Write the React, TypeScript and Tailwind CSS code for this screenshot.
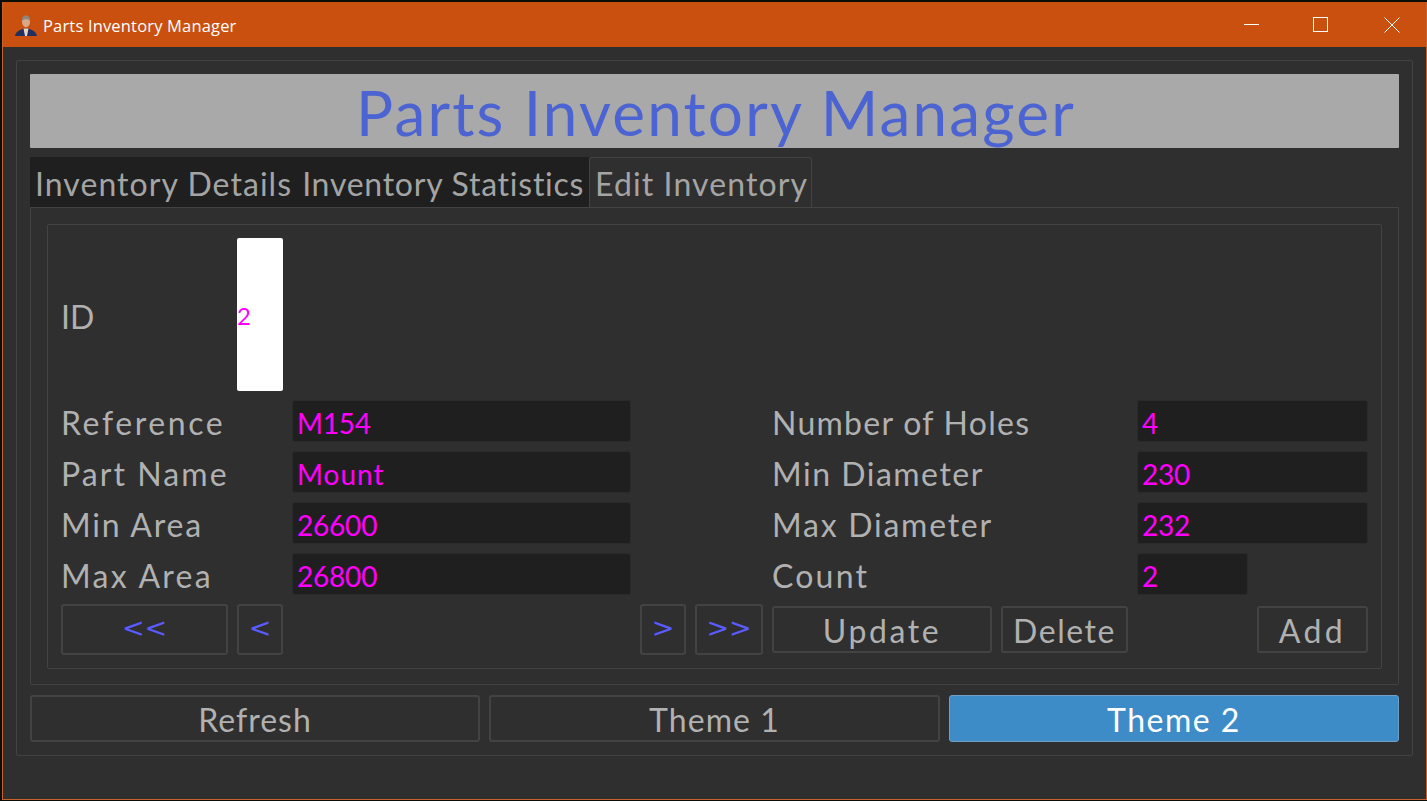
import React from "react";

const font = "font-['Lato','Open_Sans',sans-serif]";

function Field({ label, value, tl, tv = "tracking-[1px]", width = "w-[339px]", labelW = "w-[231px]" }: { label: string; value: string; tl: string; tv?: string; width?: string; labelW?: string }) {
  return (
    <div className="flex h-[42px] items-center">
      <div className={`${labelW} pt-[4px] text-[32px] ${tl} text-[#b1b1b1]`}>{label}</div>
      <div className={`${width} h-[42px] flex items-center rounded-[3px] border border-[#2a2a2a] bg-[#1f1f1f] pl-[4px] pt-[3px] text-[28px] ${tv} text-[#ff00ff]`}>{value}</div>
    </div>
  );
}

function NavBtn({ w, children }: { w: string; children: React.ReactNode }) {
  return (
    <div className={`${w} h-[51px] flex items-center justify-center rounded-[3px] border-2 border-[#434343] font-['DejaVu_Sans',sans-serif] text-[27px] text-[#5a5cff] pb-[3px]`}>{children}</div>
  );
}

function ActBtn({ w, t, children, extra = "" }: { w: string; t: string; children: React.ReactNode; extra?: string }) {
  return (
    <div className={`${w} ${extra} h-[47px] flex items-center justify-center rounded-[3px] border-2 border-[#434343] pt-[3px] text-[32px] ${t} text-[#b1b1b1]`}>{children}</div>
  );
}

export default function App() {
  return (
    <div className={`h-[801px] w-[1427px] overflow-hidden bg-[#0d0d08] pt-[2px] pl-[2px] pb-[1px] ${font}`}>
      <div className="flex h-[798px] flex-col border-l border-r border-b border-[#c9622a] bg-[#2f2f2f]">
        <div className="flex h-[45px] shrink-0 items-center justify-between bg-[#c9500e] pl-[12px]">
          <div className="flex items-center gap-[6px]">
            <svg width="22" height="24" viewBox="0 0 22 24" className="mt-[3px]">
              <path d="M0 22 C1 17 6 15.5 8.5 14.5 L13.5 14.5 C16 15.5 21 17 22 22 Z" fill="#20305f" />
              <path d="M8.5 14.5 L13.5 14.5 L12 22 L10 22 Z" fill="#e9d3c5" />
              <ellipse cx="11" cy="7.5" rx="4" ry="5.8" fill="#d9a888" />
              <path d="M7 7 C7 2.5 9 1.5 11 1.5 C13 1.5 15 2.5 15 7 C14 4.5 8 4.5 7 7 Z" fill="#8d8580" />
            </svg>
            <span className="mt-[3px] font-['Open_Sans',sans-serif] text-[16.5px] tracking-[0.17px] text-white">Parts Inventory Manager</span>
          </div>
          <div className="flex items-center">
            <div className="flex h-[45px] w-[70px] items-center justify-center">
              <div className="h-px w-[15px] bg-white" />
            </div>
            <div className="flex h-[45px] w-[70px] items-center justify-center pr-[1px]">
              <div className="h-[15px] w-[15px] border border-white" />
            </div>
            <div className="flex h-[45px] w-[70px] items-center justify-center pl-[1px]">
              <svg width="16" height="16" viewBox="0 0 16 16" stroke="white" strokeWidth="1" fill="none">
                <path d="M0.5 0.5 L15.5 15.5 M15.5 0.5 L0.5 15.5" />
              </svg>
            </div>
          </div>
        </div>

        <div className="mx-[13px] mt-[13px] flex h-[696px] flex-col rounded-[2px] border border-[#434343] px-[13px] pt-[13px]">
          <div className="flex h-[74px] shrink-0 items-center justify-center rounded-[1px] bg-[#a9a9a9] pl-[3px] pt-[3px] text-[62px] tracking-[2.2px] text-[#4b64d2]">
            Parts Inventory Manager
          </div>

          <div className="mt-[9px] flex h-[50px] shrink-0 items-end">
            <div className="flex h-[50px] w-[559px] items-center bg-[#1f1f1f] pl-[5px] pt-[4px] text-[32px] text-[#a4a4a4] whitespace-nowrap">
              <span className="tracking-[1.05px]">Inventory Details</span>
              <span className="ml-[10px] tracking-[0.75px]">Inventory Statistics</span>
            </div>
            <div className="flex h-[50px] w-[223px] items-center rounded-t-[3px] border border-b-0 border-[#434343] pl-[5px] pt-[2px] text-[32px] tracking-[1.1px] text-[#a4a4a4] whitespace-nowrap">
              Edit Inventory
            </div>
          </div>

          <div className="h-[478px] shrink-0 rounded-b-[2px] border border-[#434343] p-[16px]">
            <div className="h-[445px] rounded-[2px] border border-[#434343] pl-[13px] pr-[13px] pt-[13px]">
              <div className="flex h-[153px] items-center">
                <div className="w-[176px] pt-[4px] text-[32px] text-[#b1b1b1]">ID</div>
                <div className="flex h-[153px] w-[46px] items-center rounded-[2px] bg-white pt-[3px] text-[24px] text-[#ff00ff]">2</div>
              </div>
              <div className="mt-[9px] flex gap-[141px]">
                <div className="flex flex-col gap-[9px]">
                  <Field label="Reference" tl="tracking-[2.6px]" value="M154" tv="tracking-[-0.25px]" />
                  <Field label="Part Name" tl="tracking-[2.07px]" value="Mount" />
                  <Field label="Min Area" tl="tracking-[1.8px]" value="26600" tv="tracking-[-0.2px]" />
                  <Field label="Max Area" tl="tracking-[2.3px]" value="26800" tv="tracking-[-0.2px]" />
                </div>
                <div className="flex flex-col gap-[9px]">
                  <Field labelW="w-[365px]" width="w-[231px]" label="Number of Holes" tl="tracking-[1.27px]" value="4" />
                  <Field labelW="w-[365px]" width="w-[231px]" label="Min Diameter" tl="tracking-[1.5px]" value="230" tv="tracking-[-0.3px]" />
                  <Field labelW="w-[365px]" width="w-[231px]" label="Max Diameter" tl="tracking-[1.75px]" value="232" tv="tracking-[-0.3px]" />
                  <Field labelW="w-[365px]" width="w-[111px]" label="Count" tl="tracking-[2.2px]" value="2" />
                </div>
              </div>
              <div className="mt-[9px] flex items-center">
                <NavBtn w="w-[167px]">&lt;&lt;</NavBtn>
                <NavBtn w="w-[46px] ml-[9px]">&lt;</NavBtn>
                <NavBtn w="w-[46px] ml-[357px]">&gt;</NavBtn>
                <NavBtn w="w-[68px] ml-[9px]">&gt;&gt;</NavBtn>
                <ActBtn w="w-[220px]" t="tracking-[2.6px]" extra="ml-[9px]">Update</ActBtn>
                <ActBtn w="w-[127px]" t="tracking-[1.55px]" extra="ml-[9px]">Delete</ActBtn>
                <ActBtn w="w-[111px]" t="tracking-[3.4px]" extra="ml-[129px]">Add</ActBtn>
              </div>
            </div>
          </div>

          <div className="mt-[10px] flex gap-[9px]">
            <ActBtn w="w-[450px]" t="tracking-[1px]">Refresh</ActBtn>
            <ActBtn w="w-[451px]" t="tracking-[1.1px]">Theme 1</ActBtn>
            <div className="flex h-[47px] w-[450px] items-center justify-center rounded-[3px] border border-[#6f9fc4] bg-[#3d8cc8] pt-[3px] text-[32px] tracking-[1.5px] text-white">Theme 2</div>
          </div>
        </div>
      </div>
    </div>
  );
}
